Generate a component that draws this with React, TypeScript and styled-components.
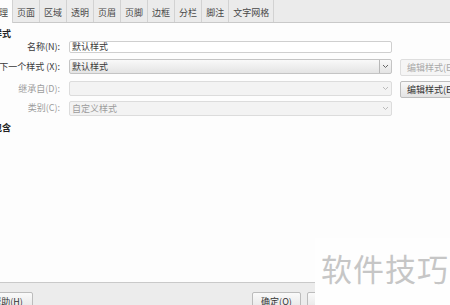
import styled, { createGlobalStyle } from 'styled-components';

const Global = createGlobalStyle`
  html, body { margin: 0; padding: 0; background: #ececec; }
  body { font-family: "Noto Sans CJK SC", "Noto Sans", sans-serif; font-size: 9px; color: #3a3a3a; }
`;

const Viewport = styled.div`
  position: relative;
  width: 450px;
  height: 305px;
  overflow: hidden;
`;

// the dialog is wider than the window, so its left and right edges are clipped
const Dialog = styled.div`
  width: 520px;
  margin-left: -20px;
  display: flex;
  flex-direction: column;
`;

const TabBar = styled.div`
  display: flex;
  height: 22px;
  padding-left: 6px;
  background: #ebebeb;
  border-bottom: 1px solid #c9c9c9;
`;

const Tab = styled.div<{ $active?: boolean }>`
  display: flex;
  align-items: center;
  padding: 2px 4px 0;
  height: ${(p) => (p.$active ? 23 : 22)}px;
  box-sizing: border-box;
  margin-bottom: ${(p) => (p.$active ? -1 : 0)}px;
  background: ${(p) => (p.$active ? '#fdfdfd' : '#ebebeb')};
  border-right: 1px solid #d2d2d2;
  color: #484848;
  white-space: nowrap;
`;

const Content = styled.div`
  height: 260px;
  background: #fdfdfd;
  padding-top: 5px;
  box-sizing: border-box;
  border-bottom: 1px solid #c9c9c9;
  display: flex;
  flex-direction: column;
`;

const Heading = styled.div<{ $top: number }>`
  margin-top: ${(p) => p.$top}px;
  height: 12px;
  line-height: 12px;
  padding-left: 13px;
  font-weight: bold;
  color: #222;
`;

const Row = styled.div<{ $top: number; $h: number }>`
  display: flex;
  align-items: flex-start;
  gap: 8px;
  margin-top: ${(p) => p.$top}px;
  height: ${(p) => p.$h}px;
`;

const Label = styled.div<{ $disabled?: boolean; $h: number }>`
  width: 80px;
  flex: none;
  text-align: right;
  white-space: nowrap;
  line-height: ${(p) => p.$h}px;
  color: ${(p) => (p.$disabled ? '#9c9c9c' : '#3a3a3a')};
  margin-right: 1px;
`;

const Input = styled.div`
  width: 323px;
  height: 12px;
  box-sizing: border-box;
  border: 1px solid #cfcfcf;
  border-radius: 2px;
  background: #fff;
  line-height: 10px;
  padding-left: 2px;
`;

const Select = styled.div<{ $disabled?: boolean; $h: number }>`
  width: 323px;
  height: ${(p) => p.$h}px;
  box-sizing: border-box;
  display: flex;
  align-items: center;
  border: 1px solid ${(p) => (p.$disabled ? '#dcdcdc' : '#c4c4c4')};
  border-radius: 2px;
  background: ${(p) => (p.$disabled ? '#f3f3f3' : 'linear-gradient(#f9f9f9, #e4e4e4)')};
  color: ${(p) => (p.$disabled ? '#9c9c9c' : '#3a3a3a')};
`;

const SelectText = styled.div`
  flex: 1;
  padding-left: 2px;
  white-space: nowrap;
`;

const Arrow = styled.div<{ $sep?: boolean }>`
  width: 11px;
  height: 100%;
  display: flex;
  align-items: center;
  justify-content: center;
  border-left: 1px solid ${(p) => (p.$sep ? '#b8b8b8' : 'transparent')};
`;

const EditButton = styled.div<{ $disabled?: boolean }>`
  width: 62px;
  height: 17px;
  box-sizing: border-box;
  display: flex;
  align-items: center;
  padding-left: 6px;
  white-space: nowrap;
  border: 1px solid ${(p) => (p.$disabled ? '#dedede' : '#bdbdbd')};
  border-radius: 2px;
  background: ${(p) => (p.$disabled ? '#f5f5f5' : 'linear-gradient(#f8f8f8, #e3e3e3)')};
  color: ${(p) => (p.$disabled ? '#a8a8a8' : '#333')};
`;

const Footer = styled.div`
  display: flex;
  height: 40px;
  background: #ececec;
  padding: 9px 0 0 2px;
  box-sizing: border-box;
`;

const ButtonGroup = styled.div`
  display: flex;
  gap: 6px;
  margin-left: 219px;
`;

const FooterButton = styled.div<{ $w: number }>`
  width: ${(p) => p.$w}px;
  height: 18px;
  box-sizing: border-box;
  border: 1px solid #bcbcbc;
  border-radius: 2px;
  background: linear-gradient(#fafafa, #e6e6e6);
  display: flex;
  justify-content: center;
  padding-top: 2px;
  color: #333;
`;

const Watermark = styled.div`
  position: absolute;
  left: 315px;
  top: 238px;
  right: 0;
  bottom: 0;
  background: #fefefe;
  color: #c6c6c6;
  font-size: 31px;
  line-height: 32px;
  padding: 14px 0 0 6px;
  letter-spacing: 1px;
  white-space: nowrap;
`;

const Chevron = ({ color }: { color: string }) => (
  <svg width="7" height="5" viewBox="0 0 7 5">
    <path d="M1 1 L3.5 3.5 L6 1" fill="none" stroke={color} strokeWidth="1" />
  </svg>
);

const tabs = ['管理', '页面', '区域', '透明', '页眉', '页脚', '边框', '分栏', '脚注', '文字网格'];

export default function App() {
  return (
    <Viewport>
      <Global />
      <Dialog>
        <TabBar>
          {tabs.map((t, i) => (
            <Tab key={t} $active={i === 0}>
              {t}
            </Tab>
          ))}
        </TabBar>
        <Content>
          <Heading $top={0}>样式</Heading>
          <Row $top={1} $h={13}>
            <Label $h={12}>名称(N):</Label>
            <Input>默认样式</Input>
          </Row>
          <Row $top={5} $h={17}>
            <Label $h={15}>下一个样式 (X):</Label>
            <Select $h={15}>
              <SelectText>默认样式</SelectText>
              <Arrow $sep>
                <Chevron color="#666" />
              </Arrow>
            </Select>
            <EditButton $disabled>编辑样式(E)</EditButton>
          </Row>
          <Row $top={5} $h={17}>
            <Label $disabled $h={15}>继承自(D):</Label>
            <Select $disabled $h={15}>
              <SelectText />
              <Arrow>
                <Chevron color="#bbb" />
              </Arrow>
            </Select>
            <EditButton>编辑样式(E)</EditButton>
          </Row>
          <Row $top={3} $h={15}>
            <Label $disabled $h={14}>类别(C):</Label>
            <Select $disabled $h={15}>
              <SelectText>自定义样式</SelectText>
              <Arrow>
                <Chevron color="#bbb" />
              </Arrow>
            </Select>
          </Row>
          <Heading $top={6}>包含</Heading>
        </Content>
        <Footer>
          <FooterButton $w={51}>帮助(H)</FooterButton>
          <ButtonGroup>
            <FooterButton $w={49}>确定(O)</FooterButton>
            <FooterButton $w={49}>取消(C)</FooterButton>
          </ButtonGroup>
        </Footer>
      </Dialog>
      <Watermark>软件技巧</Watermark>
    </Viewport>
  );
}
